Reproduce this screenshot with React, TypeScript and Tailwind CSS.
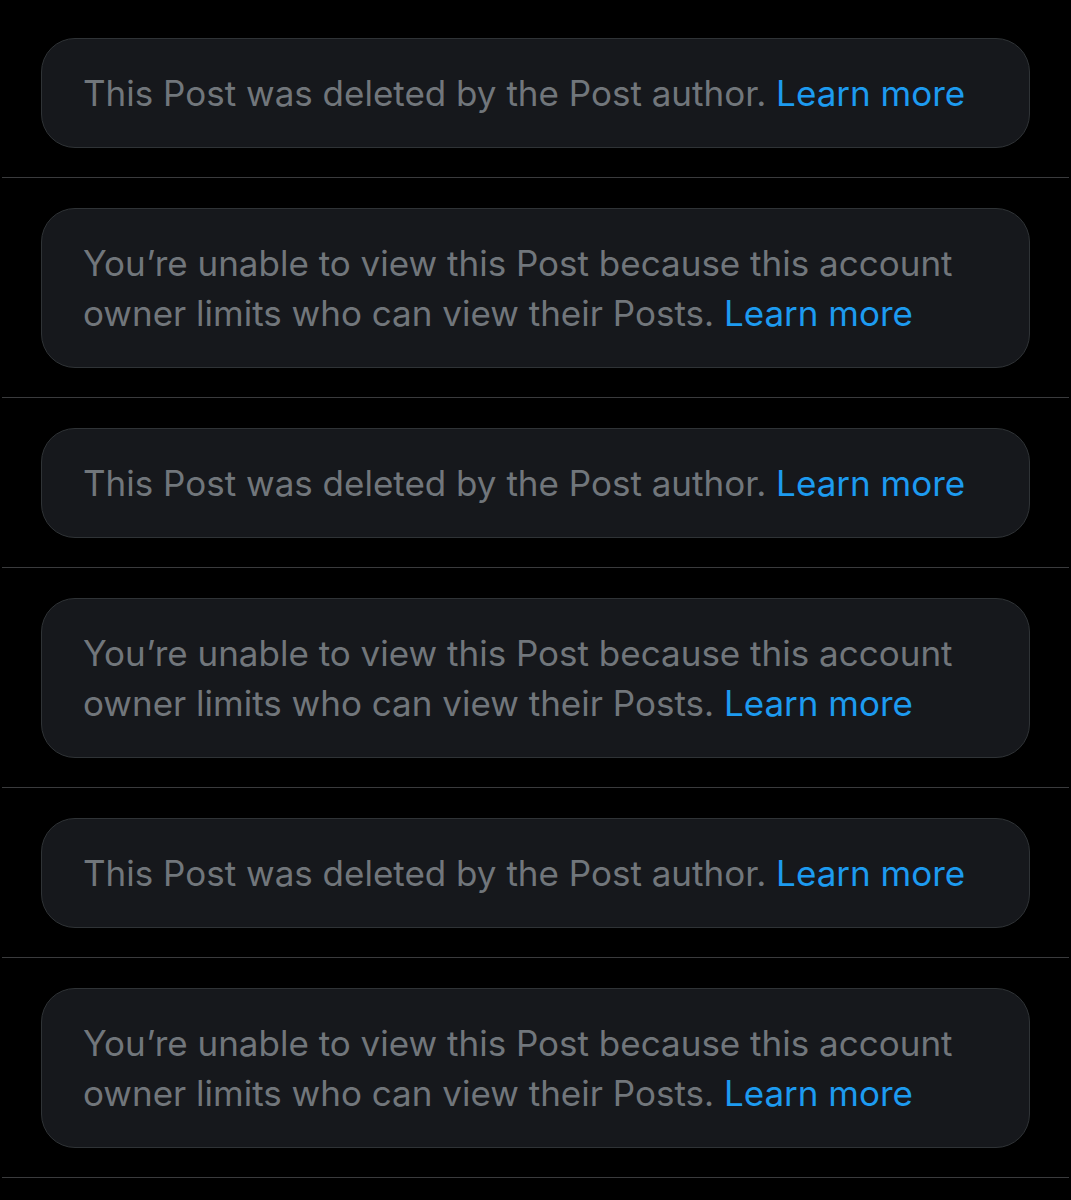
import React from "react";

const Deleted = () => (
  <>This Post was deleted by the Post author. </>
);
const Limited = () => (
  <>You’re unable to view this Post because this account owner limits who can view their Posts. </>
);

const items = [0, 1, 0, 1, 0, 1];

export default function App() {
  return (
    <div className="min-h-[1200px] bg-black pt-[8px]" style={{ fontFamily: "Inter, 'Noto Sans', sans-serif" }}>
      {items.map((k, i) => (
        <div key={i} className="px-[2px]">
          <div className="px-[39px] pt-[30px] pb-[29px]">
            <div className="rounded-[34px] border border-[#2f3336] bg-[#16181c] pl-[41px] pr-[30px] py-[29px] text-[35px] leading-[50px] text-[#71767b]">
              {k === 0 ? <Deleted /> : <Limited />}
              <span className="text-[#1d9bf0]">Learn more</span>
            </div>
          </div>
          <div className="h-px bg-[#3a3b3d]" />
        </div>
      ))}
    </div>
  );
}
